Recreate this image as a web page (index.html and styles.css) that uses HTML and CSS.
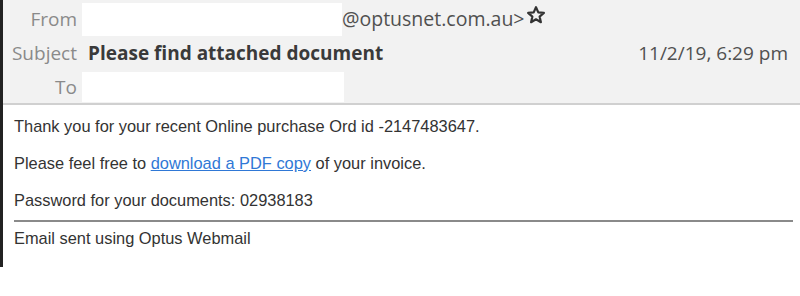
FILE: index.html
```html
<!DOCTYPE html>
<html>
<head>
<meta charset="utf-8">
<link rel="stylesheet" href="styles.css">
</head>
<body>
<div class="msg">
  <div class="hdr">
    <div class="row row-from">
      <span class="lbl">From</span>
      <span class="val from"><span class="blank blank-from"></span><span class="addr">@optusnet.com.au&gt;</span><svg class="star" viewBox="0 0 20 20" width="20" height="20"><path d="M10 2.2 L12.3 7.4 L17.9 7.9 L13.6 11.6 L14.9 17.2 L10 14.3 L5.1 17.2 L6.4 11.6 L2.1 7.9 L7.7 7.4 Z" fill="none" stroke="#333333" stroke-width="2.2" stroke-linejoin="round"/></svg></span>
    </div>
    <div class="row row-subj">
      <span class="lbl">Subject</span>
      <span class="val subject">Please find attached document</span>
      <span class="date">11/2/19, 6:29 pm</span>
    </div>
    <div class="row row-to">
      <span class="lbl">To</span>
      <span class="val"><span class="blank blank-to"></span></span>
    </div>
  </div>
  <div class="body">
    <p>Thank you for your recent Online purchase Ord id -2147483647.</p>
    <p class="p2">Please feel free to <a href="#">download a PDF copy</a> of your invoice.</p>
    <p>Password for your documents: 02938183</p>
    <hr class="sep">
    <p class="sig">Email sent using Optus Webmail</p>
  </div>
</div>
</body>
</html>
```
FILE: styles.css
```css
html, body {
  margin: 0;
  padding: 0;
  background: #ffffff;
}
.msg {
  width: 800px;
  height: 267px;
  border-left: 3px solid #222222;
  box-sizing: border-box;
}
.hdr {
  background: #f2f2f2;
  border-bottom: 2px solid #d0d0d0;
  font-family: "Open Sans", "DejaVu Sans", sans-serif;
  font-size: 19px;
  color: #3c3c3c;
}
.row {
  display: grid;
  grid-template-columns: 74px 1fr auto;
  column-gap: 5px;
  align-items: center;
}
.row-from { height: 36px; align-items: end; }
.row-subj { height: 34px; }
.row-to { height: 33px; align-items: end; }
.lbl {
  text-align: right;
  color: #8a8a8a;
  font-size: 19px;
  line-height: 24px;
}
.row-from .lbl { align-self: center; padding-top: 1px; }
.row-to .lbl { align-self: center; padding-top: 1px; }
.val {
  display: flex;
  align-items: center;
}
.blank {
  display: block;
  background: #ffffff;
}
.blank-from { width: 260px; height: 33px; }
.blank-to { width: 262px; height: 30px; margin-bottom: 1px; }
.from { align-self: stretch; padding-top: 3px; }
.addr { font-size: 19.5px; color: #505050; margin-top: -2px; }
.star { margin-left: 1px; margin-top: -10px; }
.subject {
  font-weight: 700;
  font-size: 19px;
  color: #3a3a3a;
  padding-left: 6px;
}
.date {
  font-size: 19px;
  color: #505050;
  padding-right: 12px;
}
.body {
  padding: 12px 7px 0 11px;
  font-family: "Liberation Sans", Arial, sans-serif;
  font-size: 16.4px;
  color: #333333;
}
.body p {
  margin: 0 0 18px 0;
  line-height: 19px;
}
.body .p2 { margin-top: 1px; }
.body a {
  color: #2f78d6;
  text-decoration: underline;
}
.sep {
  border: 0;
  height: 2px;
  background: #8a8a8a;
  margin: -8px 0 7px 0;
}
.body .sig { margin: 0; }
```
